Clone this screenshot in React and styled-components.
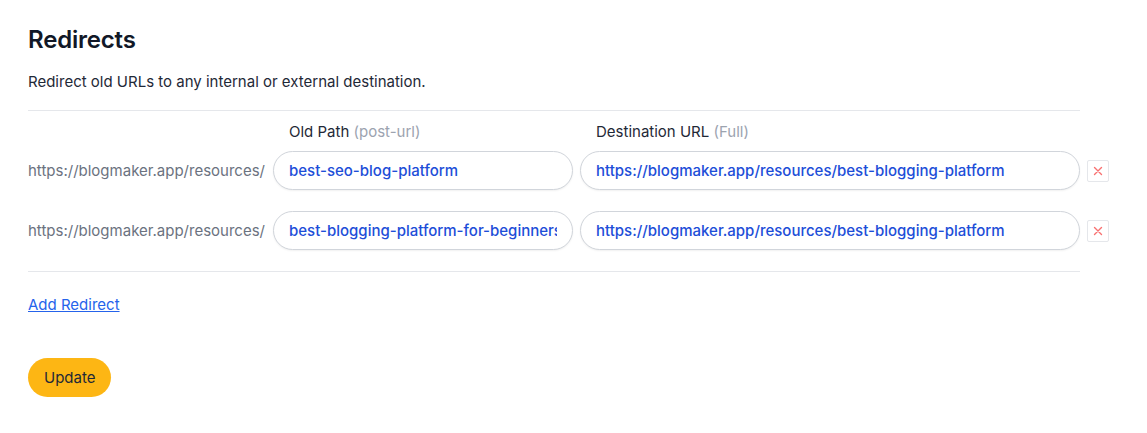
import React, { useState } from 'react';
import styled, { createGlobalStyle } from 'styled-components';

const GlobalStyle = createGlobalStyle`
  body {
    margin: 0;
    background: #ffffff;
    font-family: Inter, "Noto Sans", sans-serif;
    color: #111827;
  }
`;

const Page = styled.div`
  padding: 25px 28px 0 28px;
  width: 1052px;
`;

const Title = styled.h2`
  margin: 0;
  font-size: 24px;
  font-weight: 600;
  line-height: 30px;
  color: #111827;
  letter-spacing: -0.2px;
`;

const Desc = styled.p`
  margin: 17px 0 0 0;
  font-size: 15px;
  line-height: 20px;
  color: #1f2937;
`;

const Divider = styled.hr`
  border: none;
  border-top: 1px solid #e5e7eb;
  margin: ${props => props.margin || '0'};
`;

const Grid = styled.div`
  display: grid;
  grid-template-columns: 238px 300px 500px 22px;
  column-gap: 7px;
  row-gap: 21px;
  align-items: center;
  padding-top: 11px;
`;

const HeadLabel = styled.div`
  font-size: 15px;
  line-height: 20px;
  color: #1f2937;
  padding-left: 16px;
  margin-bottom: -12px;
`;

const Hint = styled.span`
  color: #9ca3af;
`;

const Prefix = styled.div`
  font-size: 15px;
  color: #6b7280;
  white-space: nowrap;
`;

const Input = styled.input`
  box-sizing: border-box;
  width: 100%;
  height: 39px;
  border: 1px solid #d1d5db;
  border-radius: 20px;
  padding: 0 15px;
  font-family: Inter, "Noto Sans", sans-serif;
  font-size: 15px;
  font-weight: 500;
  color: #1d4ed8;
  background: #fff;
  box-shadow: 0 1px 2px rgba(0, 0, 0, 0.06);
  outline: none;
`;

const RemoveButton = styled.button`
  box-sizing: border-box;
  width: 22px;
  height: 22px;
  padding: 0;
  display: flex;
  align-items: center;
  justify-content: center;
  border: 1px solid #e5e7eb;
  border-radius: 2px;
  background: #fff;
  cursor: pointer;
`;

const AddLink = styled.a`
  display: inline-block;
  margin-top: 23px;
  font-size: 15px;
  line-height: 20px;
  color: #2563eb;
  text-decoration: underline;
  cursor: pointer;
`;

const UpdateButton = styled.button`
  display: block;
  margin-top: 43px;
  height: 39px;
  padding: 0 16px;
  border: none;
  border-radius: 20px;
  background: #fdb614;
  font-family: Inter, "Noto Sans", sans-serif;
  font-size: 15px;
  color: #1f2937;
  cursor: pointer;
`;

const Cross = () => (
  <svg width="10" height="10" viewBox="0 0 10 10">
    <path d="M1.5 1.5l7 7M8.5 1.5l-7 7" stroke="#f87171" strokeWidth="1.4" strokeLinecap="round" />
  </svg>
);

const initial = [
  { from: 'best-seo-blog-platform', to: 'https://blogmaker.app/resources/best-blogging-platform' },
  { from: 'best-blogging-platform-for-beginners', to: 'https://blogmaker.app/resources/best-blogging-platform' },
];

export default function App() {
  const [rows, setRows] = useState(initial);

  const update = (i, key, value) =>
    setRows(rows.map((r, j) => (j === i ? { ...r, [key]: value } : r)));

  return (
    <Page>
      <GlobalStyle />
      <Title>Redirects</Title>
      <Desc>Redirect old URLs to any internal or external destination.</Desc>
      <Divider margin="18px 0 0 0" />
      <Grid>
        <div />
        <HeadLabel>
          Old Path <Hint>(post-url)</Hint>
        </HeadLabel>
        <HeadLabel>
          Destination URL <Hint>(Full)</Hint>
        </HeadLabel>
        <div />
        {rows.map((r, i) => (
          <React.Fragment key={i}>
            <Prefix>https://blogmaker.app/resources/</Prefix>
            <Input value={r.from} onChange={e => update(i, 'from', e.target.value)} />
            <Input value={r.to} onChange={e => update(i, 'to', e.target.value)} />
            <RemoveButton onClick={() => setRows(rows.filter((_, j) => j !== i))}>
              <Cross />
            </RemoveButton>
          </React.Fragment>
        ))}
      </Grid>
      <Divider margin="21px 0 0 0" />
      <AddLink onClick={() => setRows([...rows, { from: '', to: '' }])}>Add Redirect</AddLink>
      <UpdateButton>Update</UpdateButton>
    </Page>
  );
}
